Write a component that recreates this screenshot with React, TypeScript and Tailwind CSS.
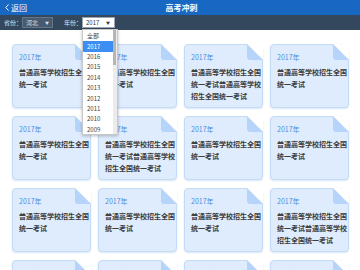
import React from 'react';

// ─── Data ─────────────────────────────────────────────────────────────────────

const SHORT = '普通高等学校招生全国统一考试';
const LONG = '普通高等学校招生全国统一考试普通高等学校招生全国统一考试';

const CARDS: string[] = [
  SHORT, SHORT, LONG, SHORT,
  SHORT, LONG, SHORT, SHORT,
  SHORT, SHORT, SHORT, LONG,
  SHORT, SHORT, SHORT, SHORT,
];

const YEARS = ['全部', '2017', '2016', '2015', '2014', '2013', '2012', '2011', '2010', '2009'];

// ─── Card ─────────────────────────────────────────────────────────────────────

function PaperCard({ text }: { text: string }) {
  return (
    <div className="relative h-[64px] rounded-[4px] border border-[#c3dbf7] bg-[#deecfd] pl-[6px] pt-[7px] shadow-[0_1px_2px_rgba(120,160,210,0.25)]">
      <svg className="absolute -right-[1px] -top-[1px]" width="16" height="16" viewBox="0 0 16 16">
        <polygon points="0,0 16,0 16,16" fill="#ffffff" />
        <polygon points="0,0 0,14 2,16 16,16" fill="#b6d4fa" />
      </svg>
      <div className="text-[7px] leading-[10px] text-[#4a8fe0]">2017年</div>
      <div className="mt-[4px] w-[71px] text-[7px] font-bold leading-[12px] text-[#3c3c3c] break-all">{text}</div>
    </div>
  );
}

// ─── Main ─────────────────────────────────────────────────────────────────────

export default function App() {
  return (
    <div className="h-[270px] w-[360px] overflow-hidden bg-white font-['Noto_Sans_CJK_SC',sans-serif]">
      {/* Header */}
      <div className="relative flex h-[15px] items-center bg-[#1767c3] text-white">
        <div className="flex items-center pl-[5px]">
          <svg width="4" height="7" viewBox="0 0 4 7">
            <polyline points="3.5,0.5 0.8,3.5 3.5,6.5" fill="none" stroke="#ffffff" strokeWidth="1" />
          </svg>
          <span className="ml-[2px] text-[8px] leading-none">返回</span>
        </div>
        <div className="absolute inset-x-0 top-0 flex h-[15px] items-center justify-center">
          <span className="ml-[3px] text-[8px] font-bold leading-none">高考冲刺</span>
        </div>
      </div>

      {/* Filter bar */}
      <div className="relative z-10 flex h-[15px] items-center bg-[#33475d] pl-[4px] text-[6px] text-[#dde3ea]">
        <span className="leading-none">省份：</span>
        <div className="flex h-[11px] w-[31px] items-center justify-between border border-[#66768a] bg-[#485a70] pl-[3px] pr-[3px]">
          <span className="leading-none">河北</span>
          <span className="text-[4px] leading-none">▼</span>
        </div>
        <span className="ml-[11px] leading-none">年份：</span>
        <div className="relative">
          <div className="flex h-[11px] w-[33px] items-center justify-between border border-[#9aa6b3] bg-white pl-[3px] pr-[4px] text-[#333]">
            <span className="leading-none">2017</span>
            <span className="text-[4px] leading-none">▼</span>
          </div>
          {/* Dropdown */}
          <div className="absolute left-0 top-[12px] flex h-[106px] w-[36px] border border-[#c8c8c8] bg-white shadow-[0_1px_3px_rgba(0,0,0,0.25)]">
            <div className="flex-1 pt-[1px]">
              {YEARS.map((y) => (
                <div
                  key={y}
                  className={
                    y === '2017'
                      ? 'flex h-[10.4px] items-center bg-[#3d8ef2] pl-[4px] text-[6px] leading-none text-white'
                      : 'flex h-[10.4px] items-center pl-[4px] text-[6px] leading-none text-[#444]'
                  }
                >
                  {y}
                </div>
              ))}
            </div>
            <div className="w-[4px] bg-[#ececec]">
              <div className="h-[35px] w-[3px] bg-[#b5b5b5]" />
            </div>
          </div>
        </div>
      </div>

      {/* Cards */}
      <div className="grid grid-cols-[repeat(4,79px)] gap-x-[7px] gap-y-[8px] pl-[12px] pt-[14px]">
        {CARDS.map((t, i) => (
          <PaperCard key={i} text={t} />
        ))}
      </div>
    </div>
  );
}
